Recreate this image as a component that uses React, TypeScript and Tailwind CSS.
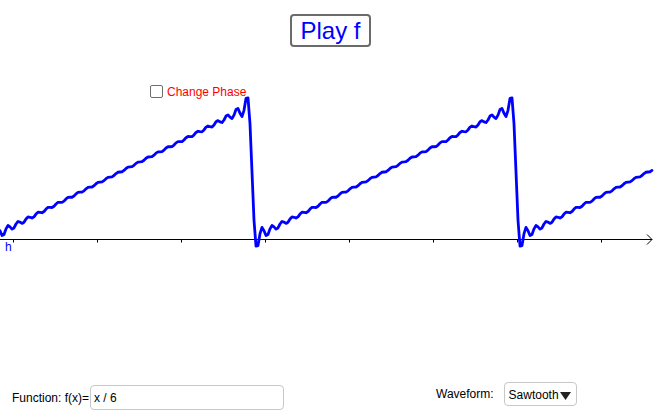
import React from "react";

const W = 655;
const H = 310;
const TOP = 60;
const AXIS = 239 - TOP;
const A = 134;
const P = 264;
const X0 = -12;
const N = 26;

function wave(x: number): number {
  const t = (2 * Math.PI * (x - X0)) / P;
  let s = 0;
  for (let k = 1; k <= N; k++) s += Math.sin(k * t) / k;
  return A / 2 - (A / Math.PI) * s;
}

function buildPath(): string {
  const pts: string[] = [];
  for (let x = 0; x <= 652; x += 2) {
    const y = AXIS - wave(x);
    pts.push(`${x === 0 ? "M" : "L"}${x.toFixed(1)},${y.toFixed(2)}`);
  }
  return pts.join(" ");
}

const ticks = [13, 97, 181, 265, 349, 433, 517, 601];

export default function App() {
  const d = buildPath();
  return (
    <div
      className="w-[655px] h-[418px] bg-white flex flex-col overflow-hidden"
      style={{ fontFamily: '"Liberation Sans", Arial, sans-serif' }}
    >
      <div className="h-[60px] flex justify-center items-start pt-[14px] pl-[6px]">
        <button className="h-[33px] px-[8px] border-2 border-[#6b6b6b] rounded-[4px] bg-white text-[#0000ff] text-[24px] leading-none flex items-center">
          Play f
        </button>
      </div>
      <div className="relative h-[310px]">
        <svg width={W} height={H} className="block">
          <line x1={0} y1={AXIS + 0.5} x2={652} y2={AXIS + 0.5} stroke="#000" strokeWidth={1} />
          <polyline
            points={`647,${AXIS - 4.5} 652,${AXIS + 0.5} 647,${AXIS + 5.5}`}
            fill="none"
            stroke="#000"
            strokeWidth={1}
          />
          {ticks.map((t) => (
            <line key={t} x1={t + 0.5} y1={AXIS} x2={t + 0.5} y2={AXIS + 3.5} stroke="#000" strokeWidth={1} />
          ))}
          <path d={d} fill="none" stroke="#0000ff" strokeWidth={2.8} strokeLinejoin="round" strokeLinecap="round" />
          <text x={5} y={AXIS + 12} fill="#0000ff" fontSize={12} fontFamily='"Liberation Sans", Arial, sans-serif'>
            h
          </text>
        </svg>
        <label className="absolute left-[150px] top-[25px] flex items-center gap-[4px] text-[12px] text-[#ff0000] leading-none">
          <span className="w-[13px] h-[13px] border border-[#6e6e6e] rounded-[2px] bg-white inline-block" />
          Change Phase
        </label>
      </div>
      <div className="h-[48px] flex items-start text-[12px] text-black">
        <div className="flex items-center ml-[12px] mt-[15px]">
          <span className="mr-[1px]">Function: f(x)=</span>
          <div className="w-[194px] h-[25px] border border-[#c8c8c8] rounded-[4px] flex items-center pl-[3px]">
            x / 6
          </div>
        </div>
        <div className="flex items-center ml-[152px] mt-[12px]">
          <span className="mr-[10px]">Waveform:</span>
          <div className="w-[73px] h-[24px] border border-[#c8c8c8] rounded-[4px] flex items-center pl-[4px] pt-[2px]">
            Sawtooth
            <svg width="11" height="9" viewBox="0 0 11 9" className="ml-[1px]">
              <polygon points="0,1 11,1 5.5,9" fill="#222" />
            </svg>
          </div>
        </div>
      </div>
    </div>
  );
}
